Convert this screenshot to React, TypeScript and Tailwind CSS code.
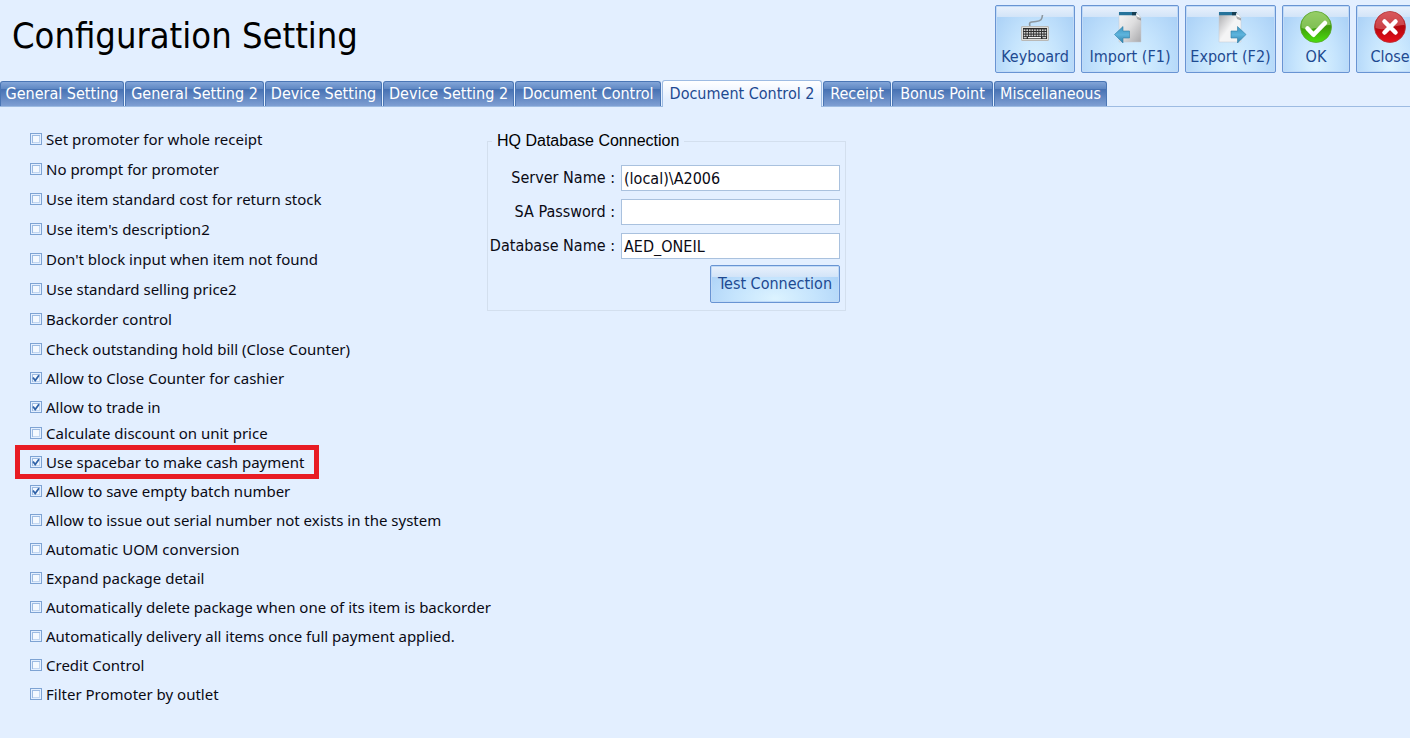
import { useState } from "react";

type Option = {
  label: string;
  checked?: boolean;
  marked?: boolean;
};

const generalOptions: Option[] = [
  { label: "Set promoter for whole receipt" },
  { label: "No prompt for promoter" },
  { label: "Use item standard cost for return stock" },
  { label: "Use item's description2" },
  { label: "Don't block input when item not found" },
  { label: "Use standard selling price2" },
  { label: "Backorder control" },
];

const counterOptions: Option[] = [
  { label: "Check outstanding hold bill (Close Counter)" },
  { label: "Allow to Close Counter for cashier", checked: true },
  { label: "Allow to trade in", checked: true },
];

const documentOptions: Option[] = [
  { label: "Calculate discount on unit price" },
  { label: "Use spacebar to make cash payment", checked: true, marked: true },
  { label: "Allow to save empty batch number", checked: true },
  { label: "Allow to issue out serial number not exists in the system" },
  { label: "Automatic UOM conversion" },
  { label: "Expand package detail" },
  { label: "Automatically delete package when one of its item is backorder" },
  { label: "Automatically delivery all items once full payment applied." },
  { label: "Credit Control" },
  { label: "Filter Promoter by outlet" },
];

const tabs = [
  { name: "General Setting", width: "w-[124px]" },
  { name: "General Setting 2", width: "w-[139px]" },
  { name: "Device Setting", width: "w-[117px]" },
  { name: "Device Setting 2", width: "w-[131px]" },
  { name: "Document Control", width: "w-[146px]" },
  { name: "Document Control 2", width: "w-[160px]" },
  { name: "Receipt", width: "w-[68px]" },
  { name: "Bonus Point", width: "w-[101px]" },
  { name: "Miscellaneous", width: "w-[113px]" },
];

function KeyboardIcon() {
  const keys = [];
  for (let row = 0; row < 3; row++) {
    for (let col = 0; col < 9; col++) {
      keys.push(<rect key={`${row}-${col}`} x={4.7 + col * 2.6} y={18.4 + row * 2.6} width="1.7" height="1.6" fill="#cfcfcf" />);
    }
  }
  return (
    <svg width="32" height="32" viewBox="0 0 32 32" aria-hidden="true">
      <path d="M11 15c-2-5 3-4 6-4.500 5-.5 6-2 6.500-6.500" fill="none" stroke="#8d979f" strokeWidth="1.6" />
      <rect x="2.500" y="15.500" width="27" height="14" rx="0.500" fill="#dededb" stroke="#b9b9b6" />
      <rect x="4" y="17" width="24" height="11" fill="#2c2c2c" />
      {keys}
      <rect x="4.700" y="26" width="3" height="1.300" fill="#ccc" />
      <rect x="9" y="26" width="13" height="1.300" fill="#f5f5f5" />
      <rect x="23.500" y="26" width="3.500" height="1.300" fill="#ccc" />
    </svg>
  );
}

function PageIcon({ direction }: { direction: "in" | "out" }) {
  const id = `page-${direction}`;
  return (
    <svg width="32" height="32" viewBox="0 0 32 32" aria-hidden="true">
      <defs>
        <linearGradient id={`${id}-fill`} x1="0" y1="0" x2="1" y2="1">
          <stop offset="0" stopColor={direction === "in" ? "#f6f6f7" : "#a9a9ac"} />
          <stop offset="0.5" stopColor={direction === "in" ? "#dededf" : "#f4f4f5"} />
          <stop offset="1" stopColor={direction === "in" ? "#a9a9ac" : "#f4f4f5"} />
        </linearGradient>
        <linearGradient id={`${id}-arrow`} x1="0" y1="0" x2="0" y2="1">
          <stop offset="0" stopColor="#3d94bf" />
          <stop offset="0.5" stopColor="#5db4dd" />
          <stop offset="1" stopColor="#2f7fa8" />
        </linearGradient>
      </defs>
      <g transform={direction === "in" ? "translate(0 0)" : "translate(-1 0)"}>
        <path d="M5 1.500h17.500l4.500 5V31H5z" fill={`url(#${id}-fill)`} stroke="#c6cbd1" strokeWidth="0.500" />
        <path d="M5 1h17.500l1 3.200H5z" fill="#26739b" />
        <path d="M18 1h4.500l1 3.200H18z" fill="#173f54" />
        <path d="M22 1.500l5 6h-4.500z" fill="#fff" />
        <path d="M22 5l1 3 4 1.500V7z" fill="#5f6265" opacity="0.5" />
      </g>
      {direction === "in" ? (
        <path d="M.5 23.500l8.500-8v4.500h6.500v7H9v5z" fill={`url(#${id}-arrow)`} stroke="#2f7fa8" strokeWidth="0.600" />
      ) : (
        <path d="M31 23.500l-8.500-8v4.500H16v7h6.500v5z" fill={`url(#${id}-arrow)`} stroke="#2f7fa8" strokeWidth="0.600" />
      )}
    </svg>
  );
}

function OkIcon() {
  return (
    <svg width="32" height="32" viewBox="0 0 32 32" aria-hidden="true">
      <defs>
        <linearGradient id="ok-fill" x1="0" y1="0" x2="0" y2="1">
          <stop offset="0" stopColor="#6ab62f" />
          <stop offset="0.5" stopColor="#3f9b0a" />
          <stop offset="1" stopColor="#4be00c" />
        </linearGradient>
      </defs>
      <circle cx="16" cy="16" r="15.500" fill="url(#ok-fill)" stroke="#5aa52c" strokeWidth="0.800" />
      <path d="M1.500 17a14.500 14.500 0 0 1 29-3c-8-1-19 7-29 3z" fill="#c4e6a0" opacity="0.5" />
      <path d="M7.500 17.500l6 6.300L25 12" fill="none" stroke="#fff" strokeWidth="4.500" strokeLinecap="round" strokeLinejoin="round" />
    </svg>
  );
}

function CloseIcon() {
  return (
    <svg width="32" height="32" viewBox="0 0 32 32" aria-hidden="true">
      <defs>
        <linearGradient id="close-fill" x1="0" y1="0" x2="0" y2="1">
          <stop offset="0" stopColor="#c92a30" />
          <stop offset="0.5" stopColor="#b3060d" />
          <stop offset="1" stopColor="#e8101a" />
        </linearGradient>
      </defs>
      <circle cx="16" cy="16" r="15.500" fill="url(#close-fill)" stroke="#b23236" strokeWidth="0.800" />
      <path d="M1.500 17a14.500 14.500 0 0 1 29-3c-8-1-19 7-29 3z" fill="#f0a0a2" opacity="0.4" />
      <path d="M10.500 10.500l11 11M21.500 10.500l-11 11" stroke="#fff" strokeWidth="4.500" strokeLinecap="round" />
    </svg>
  );
}

const buttonFace =
  "rounded-xs border border-[#6894d3] text-[#1e4a91] shadow-[inset_0_0_0_1px_#c0daf7] bg-[linear-gradient(to_bottom,#e9f1fc_0,#d2e4f8_11px,transparent_11px),radial-gradient(ellipse_at_50%_90%,#dcf3ff_0%,#c5e4fd_45%,#a5cdf5_100%)]";

const toolButtons = [
  { name: "Keyboard", width: "w-[80px]", icon: <KeyboardIcon /> },
  { name: "Import (F1)", width: "w-[98px]", icon: <PageIcon direction="in" /> },
  { name: "Export (F2)", width: "w-[91px]", icon: <PageIcon direction="out" /> },
  { name: "OK", width: "w-[68px]", icon: <OkIcon /> },
  { name: "Close", width: "w-[68px]", icon: <CloseIcon /> },
];

function CheckRow({ option, height }: { option: Option; height: string }) {
  const [checked, setChecked] = useState<boolean>(!!option.checked);

  return (
    <li className={`flex items-center ${height}`}>
      <label className="relative flex items-center gap-1 whitespace-nowrap">
        <span className="grid size-3 place-items-center">
          <input
            type="checkbox"
            checked={checked}
            onChange={(e) => setChecked(e.target.checked)}
            className="col-start-1 row-start-1 size-3 appearance-none border border-[#7ea3d3] bg-[#f4f9ff] shadow-[inset_0_0_0_1px_#e3efff,inset_2px_2px_0_0_#9dbbe2,inset_-2px_-2px_0_0_#c3d7f1]"
          />
          {checked && (
            <svg className="pointer-events-none col-start-1 row-start-1" width="12" height="12" viewBox="0 0 12 12" aria-hidden="true">
              <path d="M3 5.500l2.200 3L9 3.200" fill="none" stroke="#2f62a8" strokeWidth="1.800" />
            </svg>
          )}
        </span>
        {option.label}
        {option.marked && <span className="pointer-events-none absolute -inset-x-[15px] -inset-y-[5px] border-5 border-[#e81c24]" />}
      </label>
    </li>
  );
}

function Field({ id, label, type = "text", value }: { id: string; label: string; type?: string; value: string }) {
  return (
    <>
      <label htmlFor={id} className="text-right whitespace-nowrap">{label} :</label>
      <input id={id} type={type} defaultValue={value} className="h-[26px] w-full border border-[#a9c1de] bg-white px-[2px] outline-none" />
    </>
  );
}

export default function App() {
  const [activeTab, setActiveTab] = useState<string>("Document Control 2");

  return (
    <div className="min-h-screen overflow-hidden bg-[#e3efff] font-['DejaVu_Sans_Condensed','DejaVu_Sans',sans-serif] text-[16px] leading-6 text-[#0a0a14]">
      <header className="flex items-start justify-between pt-[5px]">
        <h1 className="pl-3 text-[36px] leading-[62px] whitespace-nowrap text-black">Configuration Setting</h1>
        <div className="-mr-[14px] flex gap-[6px]">
          {toolButtons.map(({ name, width, icon }) => (
            <button key={name} type="button" className={`flex h-[68px] shrink-0 flex-col items-center gap-[2px] pt-[5px] leading-6 whitespace-nowrap ${width} ${buttonFace}`}>
              {icon}
              <span>{name}</span>
            </button>
          ))}
        </div>
      </header>

      <nav className="mt-[7px] flex items-end gap-px border-b border-[#9dbbe2]" role="tablist">
        {tabs.map(({ name, width }) => (
          <button
            key={name}
            type="button"
            role="tab"
            aria-selected={name === activeTab}
            onClick={() => setActiveTab(name)}
            className={`flex shrink-0 items-center justify-center rounded-t-[3px] border border-b-0 leading-6 whitespace-nowrap ${width} ${
              name === activeTab
                ? "-mb-px h-[27px] border-[#9dbbe2] bg-[linear-gradient(to_bottom,#ffffff,#e3efff_70%)] text-[#1e4a91]"
                : "h-[25px] border-[#4a76b5] bg-[linear-gradient(to_bottom,#83a5d8_0%,#6089c4_28%,#4671b3_30%,#7f9fd3_100%)] text-white"
            }`}
          >
            {name}
          </button>
        ))}
      </nav>

      <main className="flex items-start pt-[17px] pl-[30px]">
        <div className="w-[457px] shrink-0 font-['Noto_Sans',sans-serif] text-[15px]">
          <ul>{generalOptions.map((option) => <CheckRow key={option.label} option={option} height="h-[30px]" />)}</ul>
          <ul>{counterOptions.map((option) => <CheckRow key={option.label} option={option} height="h-[29px]" />)}</ul>
          <ul className="-mt-[3px]">{documentOptions.map((option) => <CheckRow key={option.label} option={option} height="h-[29px]" />)}</ul>
        </div>

        <fieldset className="mt-[5px] w-[359px] border border-[#d3dfee] pr-[5px] pb-[7px]">
          <legend className="ml-1 px-[5px] font-['Liberation_Sans',Arial,sans-serif] text-[16px] leading-6 text-black">HQ Database Connection</legend>
          <div className="mt-3 grid grid-cols-[1fr_219px] items-center gap-x-[6px] gap-y-2">
            <Field id="server" label="Server Name" value="(local)\A2006" />
            <Field id="password" label="SA Password" type="password" value="" />
            <Field id="database" label="Database Name" value="AED_ONEIL" />
          </div>
          <div className="mt-[6px] flex justify-end">
            <button type="button" className={`h-[38px] w-[130px] whitespace-nowrap ${buttonFace}`}>Test Connection</button>
          </div>
        </fieldset>
      </main>
    </div>
  );
}
